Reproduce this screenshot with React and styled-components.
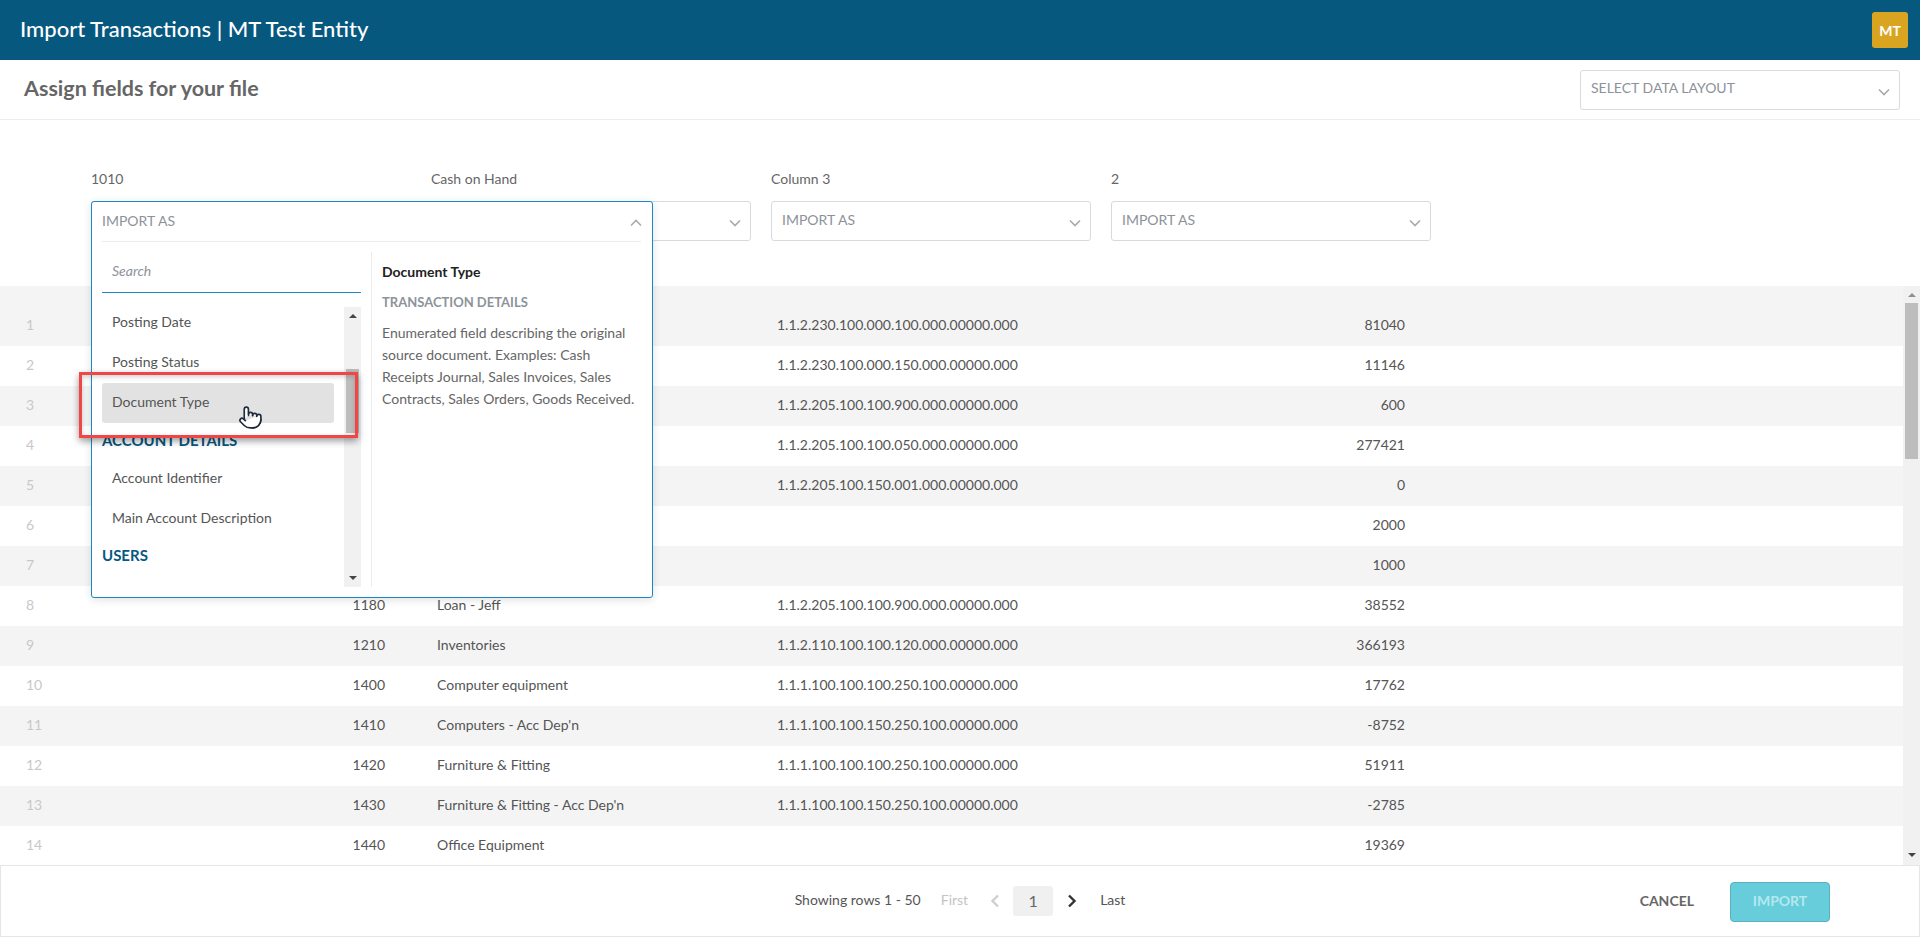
import React from 'react';
import styled, { createGlobalStyle } from 'styled-components';
import { Pointer } from 'lucide-react';

const GlobalStyle = createGlobalStyle`
  html, body { margin: 0; padding: 0; height: 100%; background: #fff; }
  body { font-family: Lato, "Open Sans", "Liberation Sans", sans-serif; font-size: 14px; color: #555; }
  * { box-sizing: border-box; }
`;

const Page = styled.div`
  height: 100vh;
  display: flex;
  flex-direction: column;
  overflow: hidden;
`;
const TopBar = styled.header`
  flex: 0 0 60px;
  background: #07587f;
  display: flex;
  align-items: center;
  justify-content: space-between;
  padding: 0 12px 0 20px;
`;
const AppTitle = styled.h1`
  margin: 0 0 3px;
  color: #fff;
  font-size: 22px;
  font-weight: 500;
`;
const Avatar = styled.div`
  width: 36px;
  height: 36px;
  border-radius: 3px;
  background: #d9a520;
  color: #fff;
  font-size: 14px;
  font-weight: 700;
  display: flex;
  align-items: center;
  justify-content: center;
`;
const SubHeader = styled.div`
  flex: 0 0 60px;
  display: flex;
  align-items: center;
  justify-content: space-between;
  padding: 0 20px 0 24px;
  border-bottom: 1px solid #ececec;
`;
const SubTitle = styled.h2`
  margin: 0 0 4px;
  font-size: 21.5px;
  font-weight: 700;
  color: #666;
`;
const Select = styled.div`
  width: 320px;
  height: 40px;
  border: 1px solid #d6dbe1;
  border-radius: 3px;
  background: #fff;
  display: flex;
  align-items: center;
  justify-content: space-between;
  padding: 0 5px 0 10px;
`;
const SelectText = styled.span`
  font-size: 14px;
  color: #8d929a;
  margin-bottom: 4px;
`;
const TriggerText = styled(SelectText)`
  margin-bottom: 2px;
`;
const SelectChevron = styled.svg`
  width: 20px;
  height: 20px;
  margin-top: ${(p) => (p.$up ? '2px' : '4px')};
  margin-right: ${(p) => (p.$up ? '-5px' : '0')};
  fill: none;
  stroke: #aaa;
  stroke-width: 2;
`;
const Mapping = styled.div`
  flex: 0 0 166px;
  display: flex;
  gap: 20px;
  padding: 50px 0 0 91px;
`;
const MapColumn = styled.div`
  position: relative;
  width: 320px;
`;
const MapLabel = styled.div`
  height: 18px;
  line-height: 18px;
  margin-bottom: 13px;
  color: #666;
`;
const Dropdown = styled.div`
  position: absolute;
  z-index: 5;
  top: 31px;
  left: 0;
  width: 562px;
  height: 397px;
  background: #fff;
  border: 1px solid #1b87c9;
  border-radius: 3px;
  box-shadow: 0 2px 8px rgba(0, 0, 0, 0.12);
`;
const DropTrigger = styled.div`
  height: 40px;
  margin: 0 11px 0 10px;
  border-bottom: 1px solid #ececec;
  display: flex;
  align-items: center;
  justify-content: space-between;
`;
const DropBody = styled.div`
  display: flex;
  padding: 10px 0 0 10px;
`;
const LeftPane = styled.div`
  width: 259px;
  margin-right: 10px;
`;
const SearchBox = styled.div`
  height: 41px;
  border-bottom: 1px solid #1b87c9;
  padding: 10px 0 0 10px;
  font-style: italic;
  color: #8d929a;
  line-height: 18px;
`;
const ListWrap = styled.div`
  display: flex;
  height: 280px;
  margin-top: 14px;
`;
const ListItems = styled.div`
  flex: 1;
  overflow: hidden;
  padding-right: 10px;
`;
const ListInner = styled.div`
  margin-top: -4px;
`;
const Option = styled.div`
  height: 40px;
  border-radius: 3px;
  padding: 0 0 3px 10px;
  display: flex;
  align-items: center;
  color: #555;
  background: ${(p) => (p.$active ? '#e2e2e2' : 'transparent')};
`;
const GroupTitle = styled.div`
  height: ${(p) => p.$h}px;
  padding-bottom: 3px;
  display: flex;
  align-items: center;
  color: #07587f;
  font-size: 15px;
  font-weight: 700;
`;
const Track = styled.div`
  flex: 0 0 17px;
  width: 17px;
  background: #f1f1f1;
  display: flex;
  flex-direction: column;
  align-items: center;
`;
const ArrowUp = styled.div`
  width: 0;
  height: 0;
  margin-top: ${(p) => p.$top}px;
  border-left: 4px solid transparent;
  border-right: 4px solid transparent;
  border-bottom: 4px solid ${(p) => p.$color};
`;
const ArrowDown = styled.div`
  width: 0;
  height: 0;
  margin-top: auto;
  margin-bottom: ${(p) => p.$bottom}px;
  border-left: 4px solid transparent;
  border-right: 4px solid transparent;
  border-top: 4px solid ${(p) => p.$color};
`;
const Thumb = styled.div`
  width: 13px;
  height: ${(p) => p.$h}px;
  margin-top: ${(p) => p.$top}px;
  background: #bdbdbd;
`;
const RightPane = styled.div`
  width: 281px;
  height: 335px;
  border-left: 1px solid #ececec;
  padding: 10px 12px 0 10px;
`;
const DetailTitle = styled.div`
  font-weight: 700;
  color: #222;
  line-height: 20px;
`;
const DetailGroup = styled.div`
  margin-top: 10px;
  font-weight: 700;
  font-size: 13px;
  color: #8d939b;
  line-height: 20px;
`;
const DetailText = styled.p`
  margin: 10px 0 0;
  line-height: 22px;
  color: #666;
`;
const Callout = styled.div`
  position: absolute;
  z-index: 6;
  left: -13px;
  top: 170px;
  width: 279px;
  height: 66px;
  border: 3px solid #f04646;
  box-shadow: 0 3px 7px rgba(0, 0, 0, 0.4), inset 0 2px 5px rgba(0, 0, 0, 0.18);
  pointer-events: none;
`;
const HandCursor = styled(Pointer)`
  position: absolute;
  z-index: 7;
  left: 146px;
  top: 203px;
  fill: #fff;
  stroke: #1d2b3c;
  stroke-width: 1.6;
`;
const TableArea = styled.div`
  flex: 1;
  min-height: 0;
  display: flex;
  overflow: hidden;
`;
const Rows = styled.div`
  flex: 1;
  overflow: hidden;
`;
const TableTop = styled.div`
  height: 20px;
  background: #f4f4f4;
`;
const Row = styled.div`
  display: grid;
  grid-template-columns: 71px 320px 320px 320px 320px;
  column-gap: 20px;
  height: 40px;
  padding-bottom: 3px;
  align-items: center;
  background: ${(p) => (p.$odd ? '#f4f4f4' : '#fff')};
  color: #555;
`;
const IndexCell = styled.div`
  padding-left: 26px;
  color: #c8c8c8;
`;
const CodeCell = styled.div`
  text-align: right;
  padding-right: 26px;
`;
const NameCell = styled.div`
  padding-left: 6px;
`;
const SegmentCell = styled.div`
  padding-left: 6px;
`;
const ValueCell = styled.div`
  text-align: right;
  padding-right: 26px;
`;
const Footer = styled.footer`
  flex: 0 0 72px;
  border: 1px solid #e6e6e6;
  display: grid;
  grid-template-columns: 1fr auto 1fr;
  align-items: center;
  background: #fff;
`;
const Pager = styled.nav`
  grid-column: 2;
  display: flex;
  align-items: center;
`;
const PagerText = styled.span`
  color: ${(p) => (p.$muted ? '#c4c4c4' : '#555')};
  margin-left: ${(p) => p.$ml || 0}px;
  margin-bottom: 3px;
`;
const PagerChevron = styled.svg`
  width: 10px;
  height: 14px;
  margin: ${(p) => p.$margin};
  fill: none;
  stroke: ${(p) => p.$color};
  stroke-width: 2.4;
`;
const PageBox = styled.div`
  width: 40px;
  height: 30px;
  padding-bottom: 2px;
  border-radius: 3px;
  background: #f0f0f0;
  display: flex;
  align-items: center;
  justify-content: center;
  font-size: 16px;
  color: #666;
`;
const Actions = styled.div`
  grid-column: 3;
  display: flex;
  align-items: center;
  justify-content: flex-end;
  gap: 36px;
  padding: 1px 89px 0 0;
`;
const CancelButton = styled.button`
  border: 0;
  padding: 0 0 3px;
  background: none;
  font: 700 14px Lato, sans-serif;
  color: #666;
`;
const ImportButton = styled.button`
  width: 100px;
  height: 40px;
  padding: 0 0 3px;
  border: 1px solid #56b3c0;
  border-radius: 4px;
  background: #67cddb;
  font: 700 14px Lato, sans-serif;
  color: #b5e8ee;
`;

const rows = [
  ['', '', '1.1.2.230.100.000.100.000.00000.000', '81040'],
  ['', '', '1.1.2.230.100.000.150.000.00000.000', '11146'],
  ['', '', '1.1.2.205.100.100.900.000.00000.000', '600'],
  ['', '', '1.1.2.205.100.100.050.000.00000.000', '277421'],
  ['', '', '1.1.2.205.100.150.001.000.00000.000', '0'],
  ['', '', '', '2000'],
  ['', '', '', '1000'],
  ['1180', 'Loan - Jeff', '1.1.2.205.100.100.900.000.00000.000', '38552'],
  ['1210', 'Inventories', '1.1.2.110.100.100.120.000.00000.000', '366193'],
  ['1400', 'Computer equipment', '1.1.1.100.100.100.250.100.00000.000', '17762'],
  ['1410', "Computers - Acc Dep'n", '1.1.1.100.100.150.250.100.00000.000', '-8752'],
  ['1420', 'Furniture & Fitting', '1.1.1.100.100.100.250.100.00000.000', '51911'],
  ['1430', "Furniture & Fitting - Acc Dep'n", '1.1.1.100.100.150.250.100.00000.000', '-2785'],
  ['1440', 'Office Equipment', '', '19369'],
];

const Chevron = ({ up }) => (
  <SelectChevron viewBox="0 0 24 24" $up={up}>
    <polyline points={up ? '6 15 12 9 18 15' : '6 9 12 15 18 9'} />
  </SelectChevron>
);

const ImportSelect = () => (
  <Select>
    <SelectText>IMPORT AS</SelectText>
    <Chevron />
  </Select>
);

export default function App() {
  return (
    <Page>
      <GlobalStyle />
      <TopBar>
        <AppTitle>Import Transactions | MT Test Entity</AppTitle>
        <Avatar>MT</Avatar>
      </TopBar>
      <SubHeader>
        <SubTitle>Assign fields for your file</SubTitle>
        <Select>
          <SelectText>SELECT DATA LAYOUT</SelectText>
          <Chevron />
        </Select>
      </SubHeader>
      <Mapping>
        <MapColumn>
          <MapLabel>1010</MapLabel>
          <ImportSelect />
          <Dropdown>
            <DropTrigger>
              <TriggerText>IMPORT AS</TriggerText>
              <Chevron up />
            </DropTrigger>
            <DropBody>
              <LeftPane>
                <SearchBox>Search</SearchBox>
                <ListWrap>
                  <ListItems>
                    <ListInner>
                      <Option>Posting Date</Option>
                      <Option>Posting Status</Option>
                      <Option $active>Document Type</Option>
                      <GroupTitle $h={36}>ACCOUNT DETAILS</GroupTitle>
                      <Option>Account Identifier</Option>
                      <Option>Main Account Description</Option>
                      <GroupTitle $h={35}>USERS</GroupTitle>
                    </ListInner>
                  </ListItems>
                  <Track>
                    <ArrowUp $top={7} $color="#444" />
                    <Thumb $top={51} $h={64} />
                    <ArrowDown $bottom={7} $color="#444" />
                  </Track>
                </ListWrap>
              </LeftPane>
              <RightPane>
                <DetailTitle>Document Type</DetailTitle>
                <DetailGroup>TRANSACTION DETAILS</DetailGroup>
                <DetailText>
                  Enumerated field describing the original source document. Examples: Cash Receipts Journal, Sales
                  Invoices, Sales Contracts, Sales Orders, Goods Received.
                </DetailText>
              </RightPane>
            </DropBody>
            <Callout />
            <HandCursor size={25} />
          </Dropdown>
        </MapColumn>
        <MapColumn>
          <MapLabel>Cash on Hand</MapLabel>
          <ImportSelect />
        </MapColumn>
        <MapColumn>
          <MapLabel>Column 3</MapLabel>
          <ImportSelect />
        </MapColumn>
        <MapColumn>
          <MapLabel>2</MapLabel>
          <ImportSelect />
        </MapColumn>
      </Mapping>
      <TableArea>
        <Rows>
          <TableTop />
          {rows.map((r, i) => (
            <Row key={i} $odd={i % 2 === 0}>
              <IndexCell>{i + 1}</IndexCell>
              <CodeCell>{r[0]}</CodeCell>
              <NameCell>{r[1]}</NameCell>
              <SegmentCell>{r[2]}</SegmentCell>
              <ValueCell>{r[3]}</ValueCell>
            </Row>
          ))}
        </Rows>
        <Track>
          <ArrowUp $top={7} $color="#8f8f8f" />
          <Thumb $top={6} $h={156} />
          <ArrowDown $bottom={8} $color="#444" />
        </Track>
      </TableArea>
      <Footer>
        <Pager>
          <PagerText>Showing rows 1 - 50</PagerText>
          <PagerText $muted $ml={20}>First</PagerText>
          <PagerChevron viewBox="0 0 10 14" $color="#cfcfcf" $margin="0 13px 0 22px">
            <polyline points="8,1.5 2.5,7 8,12.5" />
          </PagerChevron>
          <PageBox>1</PageBox>
          <PagerChevron viewBox="0 0 10 14" $color="#333" $margin="0 23px 0 14px">
            <polyline points="2,1.5 7.5,7 2,12.5" />
          </PagerChevron>
          <PagerText>Last</PagerText>
        </Pager>
        <Actions>
          <CancelButton>CANCEL</CancelButton>
          <ImportButton>IMPORT</ImportButton>
        </Actions>
      </Footer>
    </Page>
  );
}
